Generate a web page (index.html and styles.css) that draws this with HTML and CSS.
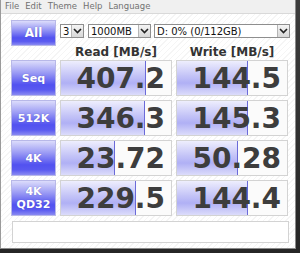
FILE: index.html
```html
<!DOCTYPE html>
<html lang="en">
<head>
  <meta charset="UTF-8" />
  <title>CrystalDiskMark</title>
  <link rel="stylesheet" href="styles.css">
</head>
<body>
  <div class="window">
    <div class="menubar">
      <span>File</span>
      <span>Edit</span>
      <span>Theme</span>
      <span>Help</span>
      <span>Language</span>
    </div>

    <div class="client">
      <div class="top">
        <div class="label all">All</div>
        <div class="combo combo-count">
          <span>3</span>
          <i class="arrow"><svg width="9" height="6" viewBox="0 0 9 6"><path d="M1 1 L4.5 4.5 L8 1" fill="none" stroke="#222" stroke-width="1.6"/></svg></i>
        </div>
        <div class="combo combo-size">
          <span>1000MB</span>
          <i class="arrow"><svg width="9" height="6" viewBox="0 0 9 6"><path d="M1 1 L4.5 4.5 L8 1" fill="none" stroke="#222" stroke-width="1.6"/></svg></i>
        </div>
        <div class="combo combo-drive">
          <span>D: 0% (0/112GB)</span>
          <i class="arrow"><svg width="9" height="6" viewBox="0 0 9 6"><path d="M1 1 L4.5 4.5 L8 1" fill="none" stroke="#222" stroke-width="1.6"/></svg></i>
        </div>
      </div>

      <div class="grid">
        <div></div>
        <div class="head">Read [MB/s]</div>
        <div class="head">Write [MB/s]</div>

        <div class="label">Seq</div>
        <div class="value"><div class="bar" style="width: 84px"></div><span>407.2</span></div>
        <div class="value"><div class="bar" style="width: 70px"></div><span>144.5</span></div>

        <div class="label">512K</div>
        <div class="value"><div class="bar" style="width: 83px"></div><span>346.3</span></div>
        <div class="value"><div class="bar" style="width: 70px"></div><span>145.3</span></div>

        <div class="label">4K</div>
        <div class="value"><div class="bar" style="width: 53px"></div><span>23.72</span></div>
        <div class="value"><div class="bar" style="width: 60px"></div><span>50.28</span></div>

        <div class="label two-line">4K<br>QD32</div>
        <div class="value"><div class="bar" style="width: 74px"></div><span>229.5</span></div>
        <div class="value"><div class="bar" style="width: 70px"></div><span>144.4</span></div>
      </div>

      <div class="comment"></div>
    </div>
  </div>
</body>
</html>
```

FILE: styles.css
```css
html, body {
  margin: 0;
  height: 100%;
}
body {
  width: 300px;
  height: 253px;
  overflow: hidden;
  background: linear-gradient(#3c3c3c, #262626);
  font-family: "DejaVu Sans", Verdana, sans-serif;
}
.window {
  width: 296px;
  height: 249px;
  box-sizing: border-box;
  border-left: 1px solid #9a9a9a;
  border-right: 1px solid #8a8a8a;
  border-bottom: 1px solid #8a8a8a;
  background: #fff;
}
.menubar {
  height: 13px;
  display: flex;
  gap: 6px;
  padding-left: 4px;
  background: #f0f0f0;
  border-bottom: 1px solid #d9d9d9;
  font-size: 8.5px;
  line-height: 13px;
  color: #727272;
}
.client {
  height: 234px;
  padding: 6px 0 0 10px;
  box-sizing: border-box;
  background: repeating-linear-gradient(135deg, #fff 0, #fff 3px, #f5f5f5 3px, #f5f5f5 4px);
}
.top {
  display: flex;
  align-items: flex-start;
  height: 26px;
}
.label {
  display: flex;
  align-items: center;
  justify-content: center;
  box-sizing: border-box;
  border: 1px solid #b8b8e8;
  background: linear-gradient(#dcdcfb, #9a9af4 35%, #5252f0 70%, #5a5af0 85%, #8a8af2);
  color: #fff;
  font-weight: bold;
  font-size: 11px;
  text-shadow: 0 0 1px rgba(60, 60, 160, 0.6);
}
.label.all {
  width: 45px;
  height: 26px;
  font-size: 12px;
}
.label.two-line {
  line-height: 13px;
  text-align: center;
}
.combo {
  display: flex;
  align-items: center;
  justify-content: space-between;
  height: 14px;
  margin-top: 4px;
  box-sizing: border-box;
  border: 1px solid #8e8e8e;
  background: #fff;
  font-size: 10px;
  color: #111;
}
.combo span {
  padding-left: 2px;
}
.combo-count {
  width: 24px;
  margin-left: 4px;
}
.combo-size {
  width: 63px;
  margin-left: 4px;
}
.combo-drive {
  width: 136px;
  margin-left: 3px;
}
.arrow {
  display: flex;
  align-items: center;
  justify-content: center;
  width: 11px;
  height: 12px;
  border-left: 1px solid #b5b5b5;
  background: linear-gradient(#f4f4f4, #d8d8d8);
}
.grid {
  display: grid;
  grid-template-columns: 45px 112px 112px;
  grid-template-rows: 10px repeat(4, 36px);
  column-gap: 4px;
  row-gap: 4px;
}
.head {
  text-align: center;
  font-weight: bold;
  font-size: 12px;
  line-height: 10px;
  color: #333;
  padding-top: 1px;
}
.value {
  position: relative;
  box-sizing: border-box;
  border: 1px solid #d3d3d3;
  background: #fbfbfb;
  text-align: right;
}
.value .bar {
  position: absolute;
  left: 0;
  top: 0;
  bottom: 0;
  border-right: 1px solid #6a6ad8;
  background: linear-gradient(#eeeefd, #c2c2f7 45%, #b0b0f5 65%, #dcdcfb);
}
.value span {
  position: relative;
  display: block;
  padding-right: 6px;
  font-weight: bold;
  font-size: 28px;
  line-height: 36px;
  color: #3d3d3d;
}
.comment {
  width: 277px;
  height: 22px;
  margin-top: 5px;
  margin-left: 1px;
  box-sizing: border-box;
  border: 1px solid #d3d3d3;
  background: #fff;
}
```
